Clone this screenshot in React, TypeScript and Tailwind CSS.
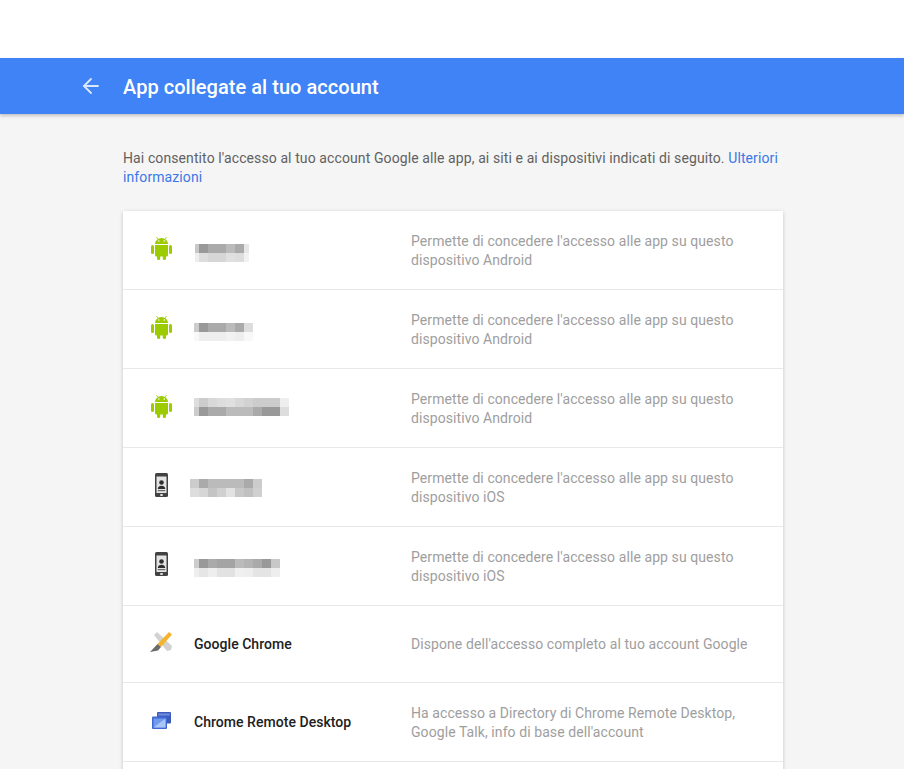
import type { ReactNode } from "react";
import { ArrowLeft } from "lucide-react";

type Cell = [number, string];

const AndroidIcon = () => (
  <svg width="21" height="24" viewBox="0 0 21 24" fill="#9ccb00">
    <path d="M5.500 1l1.300 2M15.500 1l-1.300 2" stroke="#9ccb00" strokeWidth="0.800" />
    <path d="M4 8a6.500 6 0 0 1 13 0z" />
    <circle cx="7.800" cy="5" r="0.800" fill="#fff" />
    <circle cx="13.200" cy="5" r="0.800" fill="#fff" />
    <path d="M4 9h13v10a1.500 1.500 0 0 1-1.500 1.500h-10A1.500 1.500 0 0 1 4 19z" />
    <rect x="0" y="9" width="3" height="9" rx="1.500" />
    <rect x="18" y="9" width="3" height="9" rx="1.500" />
    <rect x="6" y="19" width="3.200" height="5" rx="1.500" />
    <rect x="11.800" y="19" width="3.200" height="5" rx="1.500" />
  </svg>
);

const PhoneIcon = () => (
  <svg width="13" height="24" viewBox="0 0 13 24">
    <rect width="13" height="24" rx="1.500" fill="#424242" />
    <rect x="1.500" y="3.500" width="10" height="16.500" fill="#e4e4e4" />
    <circle cx="6.500" cy="9.500" r="2.300" fill="#2f2f2f" />
    <path d="M2.800 16c0-2.300 1.700-3.200 3.700-3.200s3.700.9 3.700 3.200z" fill="#2f2f2f" />
    <rect x="2.800" y="17" width="7.400" height="1.200" fill="#6a6a6a" />
    <rect x="5.300" y="21" width="2.400" height="2" fill="#e0e0e0" />
  </svg>
);

const ChromeToolIcon = () => (
  <svg width="22" height="20" viewBox="0 0 22 20">
    <path d="M4 3l3-3 15 14-1 4-4 1z" fill="#d2d2d2" />
    <path d="M19 0l3 2.500-11 12.500-3.500-3z" fill="#f4b42c" />
    <path d="M7.500 12l3.500 3-3 3.500L0 20z" fill="#6b6b6b" />
  </svg>
);

const RemoteDesktopIcon = () => (
  <svg width="19" height="17" viewBox="0 0 19 17">
    <rect x="5" y="0" width="14" height="11.500" rx="1" fill="#3d5bb8" />
    <rect x="6.200" y="1.500" width="11.600" height="2" fill="#6d8ee2" />
    <rect x="0" y="4.500" width="15" height="12.500" rx="1" fill="#3f68d2" />
    <rect x="1.500" y="6.500" width="12" height="9" fill="#6f9af0" />
    <path d="M1.500 15.500l12-9v9z" fill="#a9c6f8" />
  </svg>
);

const Pixelated = ({ rows, className }: { rows: Cell[][]; className: string }) => (
  <div className={className}>
    {rows.map((row, i) => (
      <div key={i} className="flex h-[9px]">
        {row.map(([w, color], j) => (
          <div key={j} style={{ width: w, backgroundColor: color }} />
        ))}
      </div>
    ))}
  </div>
);

const androidText = "Permette di concedere l'accesso alle app su questo dispositivo Android";
const iosText = "Permette di concedere l'accesso alle app su questo dispositivo iOS";

const devices: { icon: ReactNode; blur: Cell[][]; blurPos: string; text: string }[] = [
  {
    icon: <AndroidIcon />,
    blurPos: "ml-0 mt-[33px]",
    text: androidText,
    blur: [
      [[4, "#c8c8c8"], [9, "#999"], [18, "#aaa"], [9, "#bbb"], [9, "#aaa"], [5, "#e6e6e6"]],
      [[4, "#eee"], [9, "#ddd"], [18, "#d6d6d6"], [9, "#e0e0e0"], [9, "#ddd"], [5, "#f2f2f2"]],
    ],
  },
  {
    icon: <AndroidIcon />,
    blurPos: "-ml-px mt-[33px]",
    text: androidText,
    blur: [
      [[5, "#ccc"], [9, "#999"], [18, "#aaa"], [9, "#bbb"], [9, "#aaa"], [9, "#ddd"]],
      [[5, "#f8f8f8"], [9, "#eee"], [18, "#eee"], [9, "#f2f2f2"], [9, "#eee"], [9, "#f8f8f8"]],
    ],
  },
  {
    icon: <AndroidIcon />,
    blurPos: "-ml-px mt-[29px]",
    text: androidText,
    blur: [
      [[5, "#ddd"], [9, "#ccc"], [9, "#d8d8d8"], [9, "#ddd"], [9, "#e0e0e0"], [9, "#d8d8d8"], [9, "#d2d2d2"], [9, "#ccc"], [9, "#ccc"], [9, "#ccc"], [9, "#eee"]],
      [[5, "#ccc"], [9, "#999"], [18, "#aaa"], [9, "#bbb"], [9, "#bbb"], [9, "#bbb"], [9, "#aaa"], [9, "#999"], [9, "#999"], [9, "#ddd"]],
    ],
  },
  {
    icon: <PhoneIcon />,
    blurPos: "-ml-[5px] mt-[31px]",
    text: iosText,
    blur: [
      [[9, "#ccc"], [9, "#aaa"], [27, "#bbb"], [9, "#bbb"], [9, "#aaa"], [9, "#ccc"]],
      [[9, "#ddd"], [9, "#d6d6d6"], [9, "#c4c4c4"], [9, "#d0d0d0"], [9, "#e2e2e2"], [9, "#c8c8c8"], [9, "#c0c0c0"], [9, "#d0d0d0"]],
    ],
  },
  {
    icon: <PhoneIcon />,
    blurPos: "-ml-px mt-[32px]",
    text: iosText,
    blur: [
      [[5, "#ccc"], [9, "#999"], [9, "#aaa"], [18, "#a4a4a4"], [9, "#bbb"], [9, "#b4b4b4"], [9, "#aaa"], [9, "#999"], [9, "#c8c8c8"]],
      [[5, "#eee"], [9, "#e6e6e6"], [9, "#eee"], [18, "#e2e2e2"], [9, "#f0f0f0"], [9, "#eee"], [9, "#e4e4e4"], [9, "#e4e4e4"], [9, "#eee"]],
    ],
  },
];

const AppRow = ({ icon, name, text, textPos = "" }: { icon: ReactNode; name: string; text: string; textPos?: string }) => (
  <div className="flex min-h-[77px] items-center border-b border-[#e8e8e8] py-[19px]">
    <div className="mb-1 flex w-[71px] justify-center pl-[5px]">{icon}</div>
    <div className="w-[217px] text-sm font-medium tracking-[0.04px] text-[#212121]">{name}</div>
    <p className={`w-[345px] text-sm leading-[19px] tracking-[0.08px] text-[#9e9e9e] ${textPos}`}>{text}</p>
  </div>
);

export default function App() {
  return (
    <div className="h-[769px] overflow-hidden bg-[#f5f5f5] font-['Roboto',sans-serif]">
      <div className="h-[58px] bg-white" />
      <header className="flex h-14 items-center bg-[#4083f6] shadow-[0_2px_3px_rgba(0,0,0,0.2)]">
        <ArrowLeft className="ml-[79px] size-6 text-[#dbe7fd]" strokeWidth={1.800} />
        <h1 className="ml-5 pt-[2px] text-xl font-medium tracking-[0.04px] text-white">App collegate al tuo account</h1>
      </header>
      <main className="ml-[123px] w-[660px] pt-[35px]">
        <p className="text-sm leading-[19px] tracking-[0.1px] text-[#616161]">
          Hai consentito l'accesso al tuo account Google alle app, ai siti e ai dispositivi indicati di seguito.{" "}
          <a className="text-[#3b78e7]">Ulteriori informazioni</a>
        </p>
        <section className="mt-6 bg-white shadow-[0_1px_4px_rgba(0,0,0,0.2)]">
          {devices.map((device, i) => (
            <div key={i} className="flex h-[79px] items-start border-b border-[#e8e8e8]">
              <div className="mt-[25px] flex w-[71px] justify-center pl-[5px]">{device.icon}</div>
              <div className="w-[217px] pl-px">
                <Pixelated rows={device.blur} className={device.blurPos} />
              </div>
              <p className="mt-[21px] w-[345px] text-sm leading-[19px] tracking-[0.08px] text-[#9e9e9e]">{device.text}</p>
            </div>
          ))}
          <AppRow icon={<ChromeToolIcon />} name="Google Chrome" text="Dispone dell'accesso completo al tuo account Google" />
          <AppRow
            icon={<RemoteDesktopIcon />}
            name="Chrome Remote Desktop"
            text="Ha accesso a Directory di Chrome Remote Desktop, Google Talk, info di base dell'account"
            textPos="pt-[2px]"
          />
          <div className="h-10" />
        </section>
      </main>
    </div>
  );
}
